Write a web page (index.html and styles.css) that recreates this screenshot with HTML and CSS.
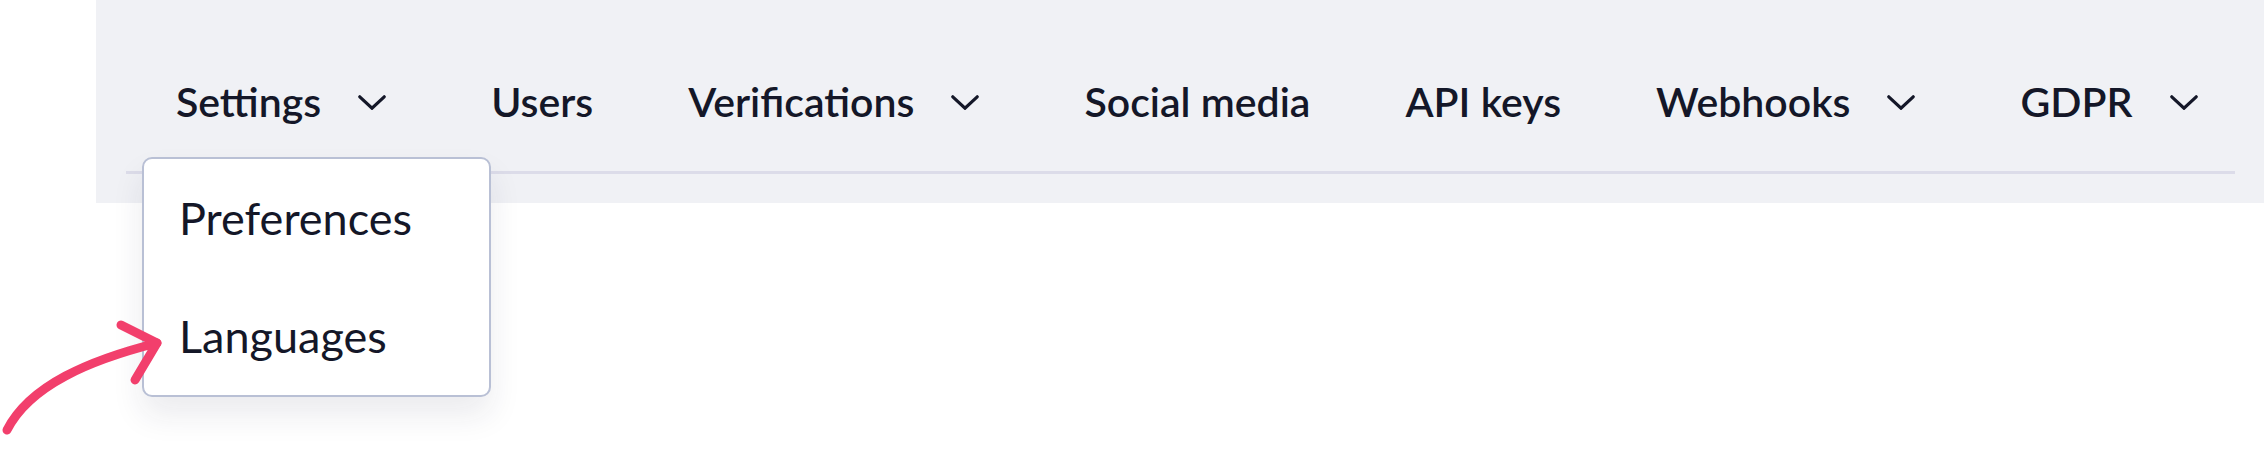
FILE: index.html
```html
<!DOCTYPE html>
<html lang="en">
<head>
<meta charset="utf-8">
<title>Settings navigation</title>
<link rel="stylesheet" href="styles.css">
</head>
<body>
<header class="panel">
  <nav class="tabs">
    <div class="tab">
      <span class="tab-label">Settings</span>
      <svg class="chev" width="28" height="15" viewBox="0 0 28 15"><path d="M1.8 1.8 L14 13.2 L26.2 1.8"/></svg>
      <div class="menu">
        <div class="menu-item">Preferences</div>
        <div class="menu-item">Languages</div>
      </div>
    </div>
    <div class="tab"><span class="tab-label">Users</span></div>
    <div class="tab">
      <span class="tab-label">Verifications</span>
      <svg class="chev" width="28" height="15" viewBox="0 0 28 15"><path d="M1.8 1.8 L14 13.2 L26.2 1.8"/></svg>
    </div>
    <div class="tab"><span class="tab-label">Social media</span></div>
    <div class="tab"><span class="tab-label">API keys</span></div>
    <div class="tab">
      <span class="tab-label">Webhooks</span>
      <svg class="chev" width="28" height="15" viewBox="0 0 28 15"><path d="M1.8 1.8 L14 13.2 L26.2 1.8"/></svg>
    </div>
    <div class="tab">
      <span class="tab-label">GDPR</span>
      <svg class="chev" width="28" height="15" viewBox="0 0 28 15"><path d="M1.8 1.8 L14 13.2 L26.2 1.8"/></svg>
    </div>
  </nav>
  <div class="divider"></div>
</header>
<svg class="annotation" width="200" height="468" viewBox="0 0 200 468">
  <path d="M7 430 C 30 385 90 360 157 343"/>
  <path d="M121 325 L157 343 L135 380"/>
</svg>
</body>
</html>
```

FILE: styles.css
```css
html, body {
  margin: 0;
  padding: 0;
  background: #ffffff;
}

body {
  font-family: Lato, "Open Sans", "Noto Sans", sans-serif;
  color: #141728;
  position: relative;
  height: 468px;
  overflow: hidden;
}

.panel {
  margin-left: 96px;
  background: #f0f1f5;
  padding: 78px 29px 29px 30px;
}

.tabs {
  display: flex;
  align-items: center;
  gap: 95px;
  padding-left: 50px;
  height: 48px;
}

.tab {
  position: relative;
  display: flex;
  align-items: center;
  font-size: 41px;
  font-weight: 600;
  line-height: 48px;
  white-space: nowrap;
}

.chev {
  margin-left: 37px;
  margin-right: 10px;
  margin-top: 1px;
  fill: none;
  stroke: #141728;
  stroke-width: 3.2;
  stroke-linecap: round;
  stroke-linejoin: miter;
}

.divider {
  margin-top: 45px;
  height: 3px;
  background: #dcdce9;
}

.menu {
  position: absolute;
  top: 79px;
  left: -34px;
  width: 349px;
  box-sizing: border-box;
  background: #ffffff;
  border: 2.5px solid #b9c0d5;
  border-radius: 10px;
  box-shadow: 0 18px 32px rgba(30, 36, 64, 0.09);
  z-index: 2;
}

.menu-item {
  padding: 29px 35px;
  font-size: 45px;
  font-weight: 400;
  line-height: 60px;
}

.annotation {
  position: absolute;
  top: 0;
  left: 0;
  z-index: 3;
  fill: none;
  stroke: #f23f6c;
  stroke-width: 9;
  stroke-linecap: round;
  stroke-linejoin: round;
}
```
